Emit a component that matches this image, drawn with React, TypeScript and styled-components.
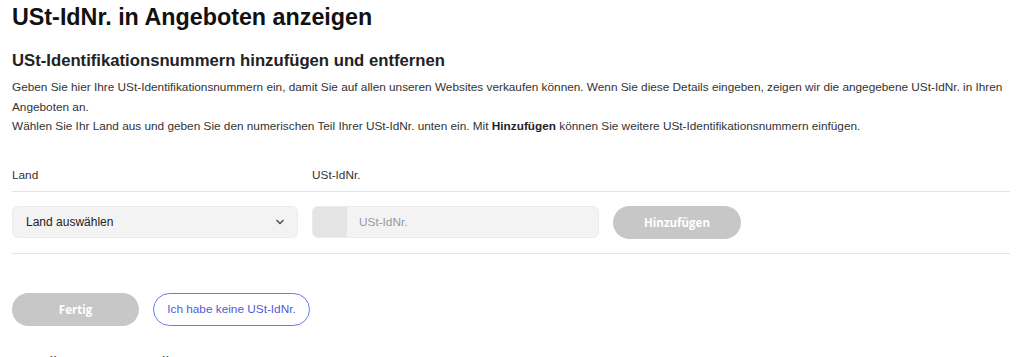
import React from "react";
import styled, { createGlobalStyle } from "styled-components";

const Global = createGlobalStyle`
  body {
    margin: 0;
    background: #fff;
    font-family: "Liberation Sans", Arial, sans-serif;
    color: #222;
  }
`;

const Page = styled.div`
  padding: 3px 14px 0 12px;
`;

const Title = styled.h1`
  margin: 0;
  font-size: 23.3px;
  line-height: 29px;
  font-weight: 700;
  color: #111;
`;

const Subtitle = styled.h2`
  margin: 18px 0 0;
  font-size: 16.7px;
  line-height: 22px;
  font-weight: 700;
  color: #222;
`;

const Text = styled.p`
  margin: 6px 0 0;
  font-size: 11.8px;
  line-height: 19.5px;
  color: #333;

  b {
    color: #222;
  }
`;

const Grid = styled.div`
  display: grid;
  grid-template-columns: 286px 287px 128px;
  column-gap: 14px;
  align-items: center;
`;

const HeadRow = styled(Grid)`
  margin-top: 31px;
  padding-bottom: 8px;
  border-bottom: 1px solid #e4e4e4;
`;

const Label = styled.div`
  font-size: 11.8px;
  line-height: 15px;
  color: #333;
`;

const InputRow = styled(Grid)`
  padding: 14px 0 14px;
  border-bottom: 1px solid #e4e4e4;
`;

const Select = styled.div`
  display: flex;
  align-items: center;
  justify-content: space-between;
  height: 32px;
  box-sizing: border-box;
  padding: 0 12px 0 13px;
  background: #f3f3f3;
  border: 1px solid #ebebeb;
  border-radius: 6px;
  font-size: 12px;
  color: #222;
`;

const Field = styled.div`
  display: flex;
  height: 32px;
  box-sizing: border-box;
  background: #f3f3f3;
  border: 1px solid #ebebeb;
  border-radius: 6px;
  overflow: hidden;
`;

const Prefix = styled.div`
  width: 34px;
  background: #e4e4e4;
`;

const Placeholder = styled.div`
  display: flex;
  align-items: center;
  padding-left: 12px;
  font-size: 11.8px;
  color: #999;
`;

const Pill = styled.button<{ $outline?: boolean }>`
  height: 33px;
  box-sizing: border-box;
  border-radius: 17px;
  white-space: nowrap;
  font-size: ${({ $outline }) => ($outline ? "11.8px" : "11.5px")};
  font-weight: ${({ $outline }) => ($outline ? 400 : 700)};
  font-family: ${({ $outline }) =>
    $outline ? `"Liberation Sans", Arial, sans-serif` : `"Open Sans", sans-serif`};
  background: ${({ $outline }) => ($outline ? "#fff" : "#c7c7c7")};
  color: ${({ $outline }) => ($outline ? "#4f5bd5" : "#fff")};
  border: ${({ $outline }) => ($outline ? "1.5px solid #6b7ae6" : "none")};
  padding: 0 8px;
  cursor: pointer;
`;

const Footer = styled.div`
  display: flex;
  gap: 14px;
  margin-top: 39px;
`;

const Next = styled.h2`
  margin: 29px 0 0;
  font-size: 16.7px;
  font-weight: 700;
  line-height: 22px;
  color: #222;
`;

export default function App() {
  return (
    <Page>
      <Global />
      <Title>USt-IdNr. in Angeboten anzeigen</Title>
      <Subtitle>USt-Identifikationsnummern hinzufügen und entfernen</Subtitle>
      <Text>
        Geben Sie hier Ihre USt-Identifikationsnummern ein, damit Sie auf allen unseren Websites
        verkaufen können. Wenn Sie diese Details eingeben, zeigen wir die angegebene USt-IdNr. in
        Ihren Angeboten an.
        <br />
        Wählen Sie Ihr Land aus und geben Sie den numerischen Teil Ihrer USt-IdNr. unten ein. Mit{" "}
        <b>Hinzufügen</b> können Sie weitere USt-Identifikationsnummern einfügen.
      </Text>
      <HeadRow>
        <Label>Land</Label>
        <Label>USt-IdNr.</Label>
        <div />
      </HeadRow>
      <InputRow>
        <Select>
          <span>Land auswählen</span>
          <svg width="10" height="6" viewBox="0 0 10 6">
            <path d="M1.5 1l3.5 3.5L8.5 1" fill="none" stroke="#444" strokeWidth="1.3" />
          </svg>
        </Select>
        <Field>
          <Prefix />
          <Placeholder>USt-IdNr.</Placeholder>
        </Field>
        <Pill>Hinzufügen</Pill>
      </InputRow>
      <Footer>
        <Pill style={{ width: 127 }}>Fertig</Pill>
        <Pill $outline style={{ width: 157 }}>Ich habe keine USt-IdNr.</Pill>
      </Footer>
      <Next>Ihre Übersicht der Überprüfungen</Next>
    </Page>
  );
}
